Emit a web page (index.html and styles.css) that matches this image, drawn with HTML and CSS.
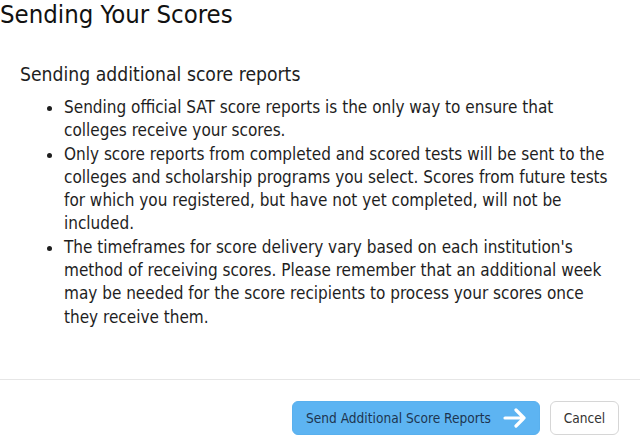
FILE: index.html
```html
<!DOCTYPE html>
<html>
<head>
<meta charset="utf-8">
<link rel="stylesheet" href="styles.css">
</head>
<body>
<div class="dialog">
  <h1 class="title">Sending Your Scores</h1>
  <div class="content">
    <h2 class="subtitle">Sending additional score reports</h2>
    <ul class="list">
      <li>Sending official SAT score reports is the only way to ensure that colleges receive your scores.</li>
      <li>Only score reports from completed and scored tests will be sent to the colleges and scholarship programs you select. Scores from future tests for which you registered, but have not yet completed, will not be included.</li>
      <li>The timeframes for score delivery vary based on each institution's method of receiving scores. Please remember that an additional week may be needed for the score recipients to process your scores once they receive them.</li>
    </ul>
  </div>
  <div class="footer">
    <button class="btn btn-primary">Send Additional Score Reports
      <svg class="arrow" width="25" height="20" viewBox="0 0 25 20"><path d="M2 10H21M13 2L21 10L13 18" fill="none" stroke="#fff" stroke-width="3.2" stroke-linecap="round" stroke-linejoin="round"/></svg>
    </button>
    <button class="btn btn-cancel">Cancel</button>
  </div>
</div>
</body>
</html>
```
FILE: styles.css
```css
html, body {
  margin: 0;
  padding: 0;
  background: #fff;
}
.dialog {
  width: 640px;
  height: 445px;
  font-family: "DejaVu Sans Condensed", "DejaVu Sans", sans-serif;
  color: #1e1e1e;
  display: flex;
  flex-direction: column;
}
.title {
  margin: 0;
  padding: 0;
  font-size: 25.5px;
  font-weight: normal;
  line-height: 29px;
  color: #111;
}
.content {
  padding: 33px 20px 0 20px;
  flex: 1;
}
.subtitle {
  margin: 0;
  font-size: 19.2px;
  font-weight: normal;
  line-height: 26px;
  color: #1e1e1e;
}
.list {
  margin: 8px 0 0 0;
  padding: 0 0 0 44px;
  font-size: 17px;
  line-height: 23.3px;
  width: 551px;
}
.footer {
  border-top: 1px solid #e6e6e6;
  height: 66px;
  display: flex;
  justify-content: flex-end;
  align-items: flex-start;
  gap: 10px;
  padding: 21px 21px 0 0;
  box-sizing: border-box;
}
.btn {
  font-family: "DejaVu Sans Condensed", "DejaVu Sans", sans-serif;
  font-size: 13.6px;
  height: 34px;
  border-radius: 6px;
  cursor: pointer;
  display: flex;
  align-items: center;
}
.btn-primary {
  background: #5db4f2;
  border: 1px solid #59b0ee;
  color: #1d3450;
  width: 248px;
  padding: 0 0 0 13px;
  gap: 12px;
}
.btn-cancel {
  background: #fff;
  border: 1px solid #d6d6d6;
  color: #333;
  width: 69px;
  justify-content: center;
  padding: 0;
}
.arrow {
  display: block;
}
```
